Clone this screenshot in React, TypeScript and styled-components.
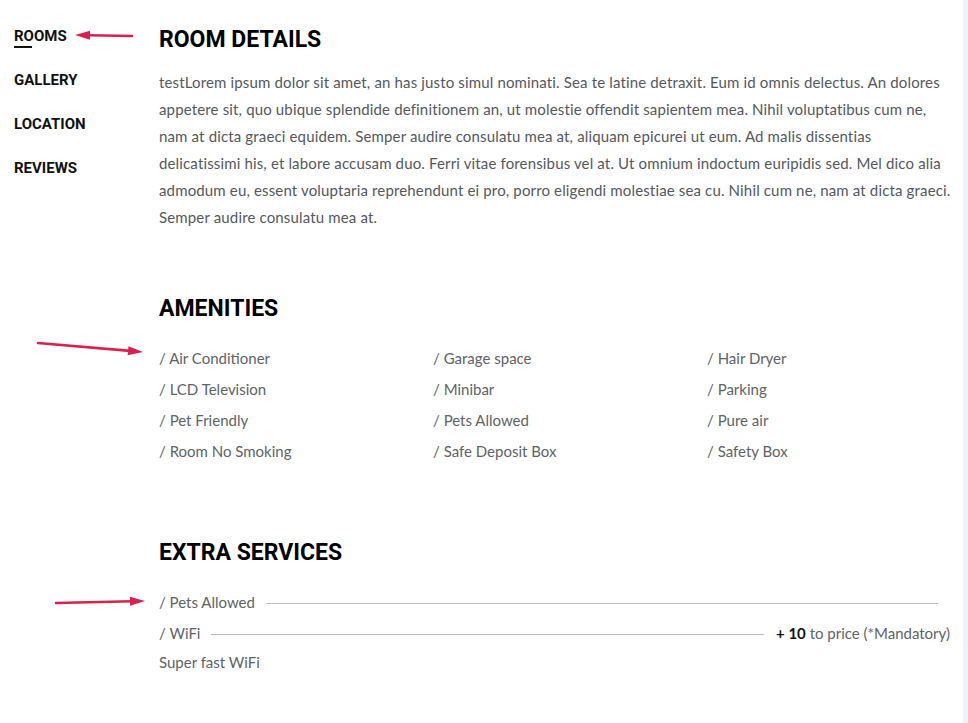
import React from "react";
import styled, { createGlobalStyle } from "styled-components";

const GlobalStyle = createGlobalStyle`
  html, body {
    margin: 0;
    padding: 0;
    background: #ffffff;
  }
  * {
    box-sizing: border-box;
  }
`;

const StyledPage = styled.div`
  position: relative;
  display: flex;
  width: 968px;
  min-height: 723px;
  background: #ffffff;
  font-family: Lato, "Open Sans", sans-serif;
`;

const SideNav = styled.nav`
  width: 159px;
  flex-shrink: 0;
  padding: 26px 0 0 14px;
  display: flex;
  flex-direction: column;
  gap: 24px;
`;

const NavItem = styled.a<{ $active?: boolean }>`
  position: relative;
  display: block;
  font-family: Roboto, "Liberation Sans", sans-serif;
  font-weight: 700;
  font-size: 15px;
  line-height: 20px;
  text-transform: uppercase;
  color: #111111;
  text-decoration: none;

  &::after {
    content: "";
    display: ${({ $active }) => ($active ? "block" : "none")};
    position: absolute;
    left: 0;
    top: 20px;
    width: 18px;
    height: 2px;
    background: #111111;
  }
`;

const Main = styled.main`
  flex: 1;
  padding: 26px 11px 40px 0;
`;

const Strip = styled.div`
  width: 5px;
  flex-shrink: 0;
  background: #eef2fa;
`;

const Section = styled.section<{ $space?: number }>`
  margin-bottom: ${({ $space }) => $space ?? 64}px;
`;

const Heading = styled.h2`
  margin: 0;
  font-family: Roboto, "Liberation Sans", sans-serif;
  font-weight: 700;
  font-size: 23px;
  line-height: 28px;
  color: #000000;
  text-transform: uppercase;
`;

const Text = styled.p`
  margin: 15px 0 0;
  font-size: 15px;
  line-height: 27px;
  color: #555860;
  letter-spacing: 0.15px;
`;

const AmenityGrid = styled.ul`
  list-style: none;
  margin: 20px 0 0;
  padding: 0;
  display: grid;
  grid-template-columns: 274px 274px 1fr;
`;

const Amenity = styled.li`
  font-size: 15px;
  line-height: 31px;
  color: #606368;
  white-space: nowrap;
`;

const ServiceList = styled.div`
  margin: 20px 2px 0 0;
  display: flex;
  flex-direction: column;
`;

const ServiceRow = styled.div`
  display: flex;
  align-items: baseline;
  font-size: 15px;
  line-height: 31px;
  color: #606368;
`;

const ServiceName = styled.span`
  white-space: nowrap;
`;

const Dots = styled.span`
  flex: 1;
  margin-left: 11px;
  border-bottom: 1px solid #bdbdbd;
  transform: translateY(-4px);
`;

const Price = styled.span<{ $gap?: number }>`
  margin-left: ${({ $gap }) => $gap ?? 12}px;
  white-space: nowrap;
  color: #606368;

  b {
    color: #111111;
    font-weight: 700;
  }
`;

const ServiceNote = styled.div`
  font-size: 15px;
  line-height: 27px;
  color: #606368;
`;

const Arrow = styled.svg`
  position: absolute;
  left: 0;
  top: 0;
  overflow: visible;
  pointer-events: none;
`;

const ArrowMark = ({
  x1,
  y1,
  x2,
  y2,
}: {
  x1: number;
  y1: number;
  x2: number;
  y2: number;
}) => {
  const dx = x2 - x1;
  const dy = y2 - y1;
  const len = Math.sqrt(dx * dx + dy * dy);
  const ux = dx / len;
  const uy = dy / len;
  const bx = x2 - ux * 15;
  const by = y2 - uy * 15;
  const px = -uy * 4.5;
  const py = ux * 4.5;
  return (
    <Arrow width={1} height={1}>
      <line
        x1={x1}
        y1={y1}
        x2={bx + ux * 2}
        y2={by + uy * 2}
        stroke="#d9204f"
        strokeWidth={2.6}
        strokeLinecap="round"
      />
      <polygon
        points={`${x2},${y2} ${bx + px},${by + py} ${bx - px},${by - py}`}
        fill="#d9204f"
      />
    </Arrow>
  );
};

const amenities = [
  "Air Conditioner",
  "Garage space",
  "Hair Dryer",
  "LCD Television",
  "Minibar",
  "Parking",
  "Pet Friendly",
  "Pets Allowed",
  "Pure air",
  "Room No Smoking",
  "Safe Deposit Box",
  "Safety Box",
];

const App = () => {
  return (
    <>
      <GlobalStyle />
      <StyledPage>
        <SideNav>
          <NavItem $active>Rooms</NavItem>
          <NavItem>Gallery</NavItem>
          <NavItem>Location</NavItem>
          <NavItem>Reviews</NavItem>
        </SideNav>
        <Main>
          <Section $space={64}>
            <Heading>Room Details</Heading>
            <Text>
              testLorem ipsum dolor sit amet, an has justo simul nominati. Sea
              te latine detraxit. Eum id omnis delectus. An dolores appetere
              sit, quo ubique splendide definitionem an, ut molestie offendit
              sapientem mea. Nihil voluptatibus cum ne, nam at dicta graeci
              equidem. Semper audire consulatu mea at, aliquam epicurei ut eum.
              Ad malis dissentias delicatissimi his, et labore accusam duo.
              Ferri vitae forensibus vel at. Ut omnium indoctum euripidis sed.
              Mel dico alia admodum eu, essent voluptaria reprehendunt ei pro,
              porro eligendi molestiae sea cu. Nihil cum ne, nam at dicta
              graeci. Semper audire consulatu mea at.
            </Text>
          </Section>
          <Section $space={72}>
            <Heading>Amenities</Heading>
            <AmenityGrid>
              {amenities.map((item) => (
                <Amenity key={item}>/ {item}</Amenity>
              ))}
            </AmenityGrid>
          </Section>
          <Section $space={0}>
            <Heading>Extra Services</Heading>
            <ServiceList>
              <ServiceRow>
                <ServiceName>/ Pets Allowed</ServiceName>
                <Dots />
                <Price $gap={12} />
              </ServiceRow>
              <ServiceRow>
                <ServiceName>/ WiFi</ServiceName>
                <Dots />
                <Price $gap={12}>
                  <b>+ 10</b> to price (*Mandatory)
                </Price>
              </ServiceRow>
              <ServiceNote>Super fast WiFi</ServiceNote>
            </ServiceList>
          </Section>
        </Main>
        <Strip />
        <ArrowMark x1={132} y1={36} x2={75} y2={35} />
        <ArrowMark x1={38} y1={343} x2={143} y2={352} />
        <ArrowMark x1={56} y1={603} x2={145} y2={601} />
      </StyledPage>
    </>
  );
};

export default App;
